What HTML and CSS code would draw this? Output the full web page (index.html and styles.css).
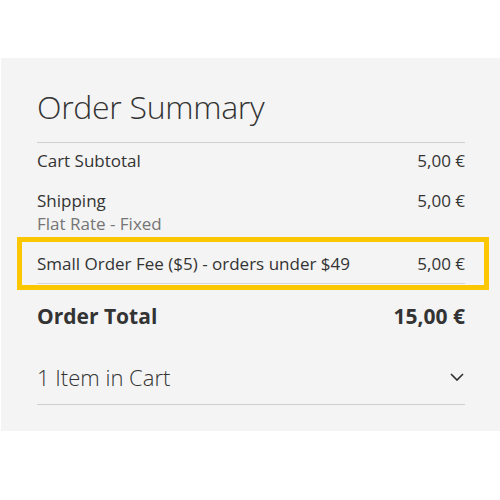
FILE: index.html
```html
<!DOCTYPE html>
<html>
<head>
<meta charset="utf-8">
<link rel="stylesheet" href="styles.css">
</head>
<body>
<div class="page">
  <div class="summary">
    <div class="title">Order Summary</div>
    <div class="rows">
      <div class="row">
        <span>Cart Subtotal</span><span>5,00 €</span>
      </div>
      <div class="row shipping">
        <div class="label">
          <span>Shipping</span>
          <span class="sub">Flat Rate - Fixed</span>
        </div>
        <span>5,00 €</span>
      </div>
      <div class="fee-box">
        <div class="row fee">
          <span>Small Order Fee ($5) - orders under $49</span><span>5,00 €</span>
        </div>
      </div>
      <div class="row total">
        <span>Order Total</span><span>15,00 €</span>
      </div>
    </div>
    <div class="cart">
      <span>1 Item in Cart</span>
      <svg class="chevron" width="14" height="8" viewBox="0 0 14 8"><polyline points="1,1 7,7 13,1" fill="none" stroke="#333" stroke-width="1.7"/></svg>
    </div>
  </div>
</div>
</body>
</html>
```
FILE: styles.css
```css
html, body {
  margin: 0;
  background: #fff;
}
body {
  font-family: "Open Sans", "Liberation Sans", sans-serif;
  color: #333;
}
.page {
  padding: 58px 0 0 1px;
}
.summary {
  background: #f4f4f4;
  padding: 29px 35px 26px 36px;
}
.title {
  font-size: 32px;
  font-weight: 300;
  letter-spacing: -0.3px;
  line-height: 40px;
  padding-bottom: 15px;
  border-bottom: 1px solid #cfcfcf;
}
.rows {
  display: flex;
  flex-direction: column;
  padding-top: 6px;
  font-size: 17px;
  line-height: 23.4px;
}
.row {
  display: flex;
  justify-content: space-between;
  align-items: flex-start;
}
.shipping {
  margin-top: 16.6px;
}
.label {
  display: flex;
  flex-direction: column;
}
.sub {
  color: #757575;
}
.fee-box {
  margin: 1.3px -24px 0 -20px;
  padding: 10px 19px 1px 15px;
  border: 5px solid #fcc600;
}
.fee {
  padding-bottom: 7.6px;
  border-bottom: 1px solid #d6d6d6;
}
.total {
  margin-top: 13px;
  font-size: 21px;
  font-weight: 700;
  line-height: 26px;
}
.cart {
  display: flex;
  justify-content: space-between;
  align-items: center;
  margin-top: 33px;
  font-size: 22px;
  font-weight: 300;
  line-height: 30px;
  padding-bottom: 12px;
  border-bottom: 1px solid #cfcfcf;
}
.chevron {
  display: block;
  margin-right: 1px;
}
```
